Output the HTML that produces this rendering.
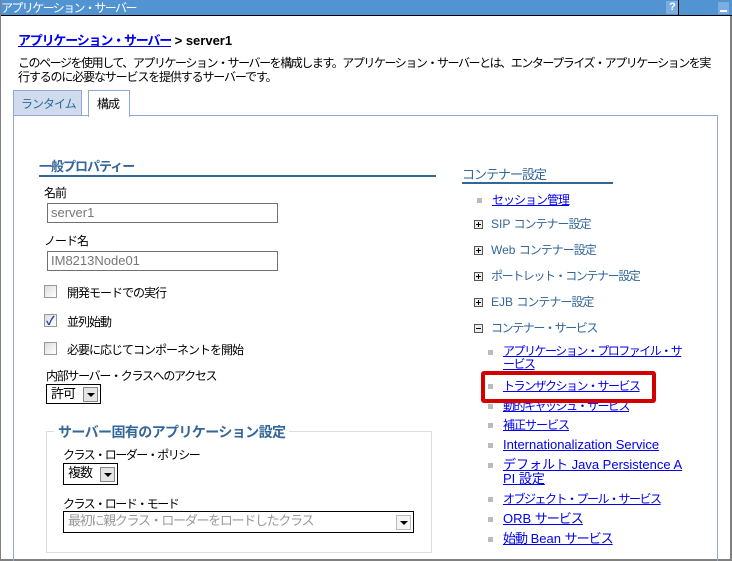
<!DOCTYPE html>
<html><head><meta charset="utf-8"><style>
*{margin:0;padding:0;box-sizing:border-box}
body{width:732px;height:561px;overflow:hidden;background:#fff;position:relative;font-family:"Liberation Sans","Noto Sans CJK JP",sans-serif;font-size:12px;color:#000;letter-spacing:-1px}
.a{position:absolute;white-space:nowrap;line-height:14px}
a,.lk{color:#0000ee;text-decoration:underline}
.inp{position:absolute;border:1px solid #707070;color:#777;padding:1px 3px;font-size:13px;line-height:16px;background:#fff;letter-spacing:0}
.cb{position:absolute;width:13px;height:13px;border:1px solid #999;background:linear-gradient(135deg,#ddd,#fff)}
.sel{position:absolute;border:1px solid #000;background:#fff;font-size:13px;line-height:16px;padding:1px 4px}
.arr{position:absolute;right:2px;top:2px;width:15px;height:15px;border:1px solid #888;background:#e4e4e4}
.arr:after{content:"";position:absolute;left:3px;top:5px;border-left:4px solid transparent;border-right:4px solid transparent;border-top:4px solid #000}
.pl{position:absolute;width:9px;height:9px;border:1px solid #555;background:#eee}
.pl:before{content:"";position:absolute;left:1px;top:3px;width:5px;height:1px;background:#000}
.pl.p:after{content:"";position:absolute;left:3px;top:1px;width:1px;height:5px;background:#000}
.bu{position:absolute;width:5px;height:5px;background:#bbb}
.en{letter-spacing:0}
</style></head><body>
<div style="position:absolute;left:0;top:0;width:732px;height:16px;background:#5294d2;border-bottom:1px solid #000"></div>
<div class="a" style="left:1px;top:1px;color:#fff;font-size:12px;letter-spacing:-1.6px">アプリケーション・サーバー</div>
<div style="position:absolute;left:666px;top:1px;width:12px;height:13px;background:#7aaee0;color:#fff;font-size:11px;text-align:center;line-height:13px;font-weight:bold">?</div>
<div style="position:absolute;left:678px;top:0;width:1px;height:16px;background:#000"></div>
<div style="position:absolute;left:718px;top:2px;width:11px;height:12px;background:#7aaee0"><div style="position:absolute;left:2px;top:8px;width:7px;height:2px;background:#fff"></div></div>
<div style="position:absolute;left:0;top:0;width:1px;height:561px;background:#808080"></div>
<div style="position:absolute;left:730px;top:16px;width:2px;height:545px;background:#808080"></div>
<div style="position:absolute;left:0;top:559px;width:732px;height:2px;background:#808080"></div>

<div class="a" style="left:18px;top:34px;font-size:13px;font-weight:bold;letter-spacing:-1.2px"><span class="lk" style="font-weight:bold">アプリケーション・サーバー</span><span class="en"> &gt; server1</span></div>
<div class="a" style="left:18px;top:56px;letter-spacing:-1.45px">このページを使用して、アプリケーション・サーバーを構成します。アプリケーション・サーバーとは、エンタープライズ・アプリケーションを実</div>
<div class="a" style="left:18px;top:70px;letter-spacing:-1.15px">行するのに必要なサービスを提供するサーバーです。</div>

<div style="position:absolute;left:13px;top:90px;width:69px;height:26px;background:#d0dcee;border:1px solid #8ea9d6;border-bottom:none"></div>
<div class="a" style="left:21px;top:97px;color:#2a6a9a">ランタイム</div>
<div style="position:absolute;left:13px;top:115px;width:705px;height:446px;border:1px solid #8ea9d6;border-bottom:none"></div>
<div style="position:absolute;left:88px;top:90px;width:42px;height:27px;background:#fff;border:1px solid #8ea9d6;border-bottom:none"></div>
<div class="a" style="left:97px;top:97px">構成</div>

<div class="a" style="left:39px;top:160px;color:#336699;font-weight:bold;font-size:13px">一般プロパティー</div>
<div style="position:absolute;left:39px;top:175px;width:397px;height:2px;background:#336699"></div>
<div class="a" style="left:44px;top:186px">名前</div>
<div class="inp" style="left:47px;top:203px;width:231px;height:20px">server1</div>
<div class="a" style="left:44px;top:234px">ノード名</div>
<div class="inp" style="left:47px;top:251px;width:231px;height:20px">IM8213Node01</div>
<div class="cb" style="left:44px;top:285px"></div><div class="a" style="left:67px;top:286px">開発モードでの実行</div>
<div class="cb" style="left:44px;top:314px"><span style="position:absolute;left:1px;top:-3px;color:#2244aa;font-size:12px;font-weight:bold">✓</span></div><div class="a" style="left:67px;top:315px">並列始動</div>
<div class="cb" style="left:44px;top:342px"></div><div class="a" style="left:67px;top:343px">必要に応じてコンポーネントを開始</div>
<div class="a" style="left:46px;top:369px;letter-spacing:-1.3px">内部サーバー・クラスへのアクセス</div>
<div class="sel" style="left:46px;top:384px;width:55px;height:20px">許可<div class="arr"></div></div>

<div style="position:absolute;left:46px;top:431px;width:386px;height:122px;border:1px solid #ddd"></div>
<div class="a" style="left:54px;top:424px;background:#fff;padding:0 4px;color:#336699;font-weight:bold;font-size:14px;line-height:16px;letter-spacing:-0.6px">サーバー固有のアプリケーション設定</div>
<div class="a" style="left:63px;top:448px;letter-spacing:-1.5px">クラス・ローダー・ポリシー</div>
<div class="sel" style="left:63px;top:463px;width:55px;height:22px">複数<div class="arr" style="top:3px"></div></div>
<div class="a" style="left:63px;top:497px;letter-spacing:-1.5px">クラス・ロード・モード</div>
<div class="sel" style="left:63px;top:511px;width:351px;height:22px;color:#999;letter-spacing:-1.3px">最初に親クラス・ローダーをロードしたクラス<div class="arr" style="top:3px;border-color:#bbb;background:#f4f4f4"></div></div>

<div class="a" style="left:462px;top:168px;color:#336699;font-size:13px">コンテナー設定</div>
<div style="position:absolute;left:462px;top:182px;width:151px;height:2px;background:#336699"></div>
<div class="bu" style="left:477px;top:198px"></div><div class="a lk" style="left:492px;top:193px">セッション管理</div>
<div class="pl p" style="left:474px;top:220px"></div><div class="a" style="left:491px;top:217px;color:#336699"><span class="en">SIP </span>コンテナー設定</div>
<div class="pl p" style="left:474px;top:246px"></div><div class="a" style="left:491px;top:243px;color:#336699"><span class="en">Web </span>コンテナー設定</div>
<div class="pl p" style="left:474px;top:272px"></div><div class="a" style="left:491px;top:269px;color:#336699;letter-spacing:-1.4px">ポートレット・コンテナー設定</div>
<div class="pl p" style="left:474px;top:298px"></div><div class="a" style="left:491px;top:295px;color:#336699"><span class="en">EJB </span>コンテナー設定</div>
<div class="pl" style="left:474px;top:324px"></div><div class="a" style="left:491px;top:321px;color:#336699;letter-spacing:-1.4px">コンテナー・サービス</div>
<div class="bu" style="left:488px;top:350px"></div><div class="a lk" style="left:503px;top:345px;line-height:13px;letter-spacing:-1.5px">アプリケーション・プロファイル・サ<br>ービス</div>
<div class="bu" style="left:488px;top:384px"></div><div class="a lk" style="left:503px;top:379px;letter-spacing:-1.5px">トランザクション・サービス</div>
<div class="bu" style="left:488px;top:404px"></div><div class="a lk" style="left:503px;top:399px;letter-spacing:-1.5px">動的キャッシュ・サービス</div>
<div class="bu" style="left:488px;top:423px"></div><div class="a lk" style="left:503px;top:418px">補正サービス</div>
<div class="bu" style="left:488px;top:443px"></div><div class="a lk en" style="left:503px;top:438px;font-size:13px">Internationalization Service</div>
<div class="bu" style="left:488px;top:463px"></div><div class="a lk" style="left:503px;top:458px;font-size:13px;line-height:14px;letter-spacing:0">デフォルト Java Persistence A<br>PI 設定</div>
<div class="bu" style="left:488px;top:497px"></div><div class="a lk" style="left:503px;top:492px;letter-spacing:-1.5px">オブジェクト・プール・サービス</div>
<div class="bu" style="left:488px;top:517px"></div><div class="a lk" style="left:503px;top:512px;font-size:13px"><span class="en">ORB </span>サービス</div>
<div class="bu" style="left:488px;top:537px"></div><div class="a lk" style="left:503px;top:532px;font-size:13px">始動<span class="en"> Bean </span>サービス</div>
<div style="position:absolute;left:481px;top:371px;width:175px;height:32px;border:4px solid #d40000;border-radius:3px"></div>
</body></html>
